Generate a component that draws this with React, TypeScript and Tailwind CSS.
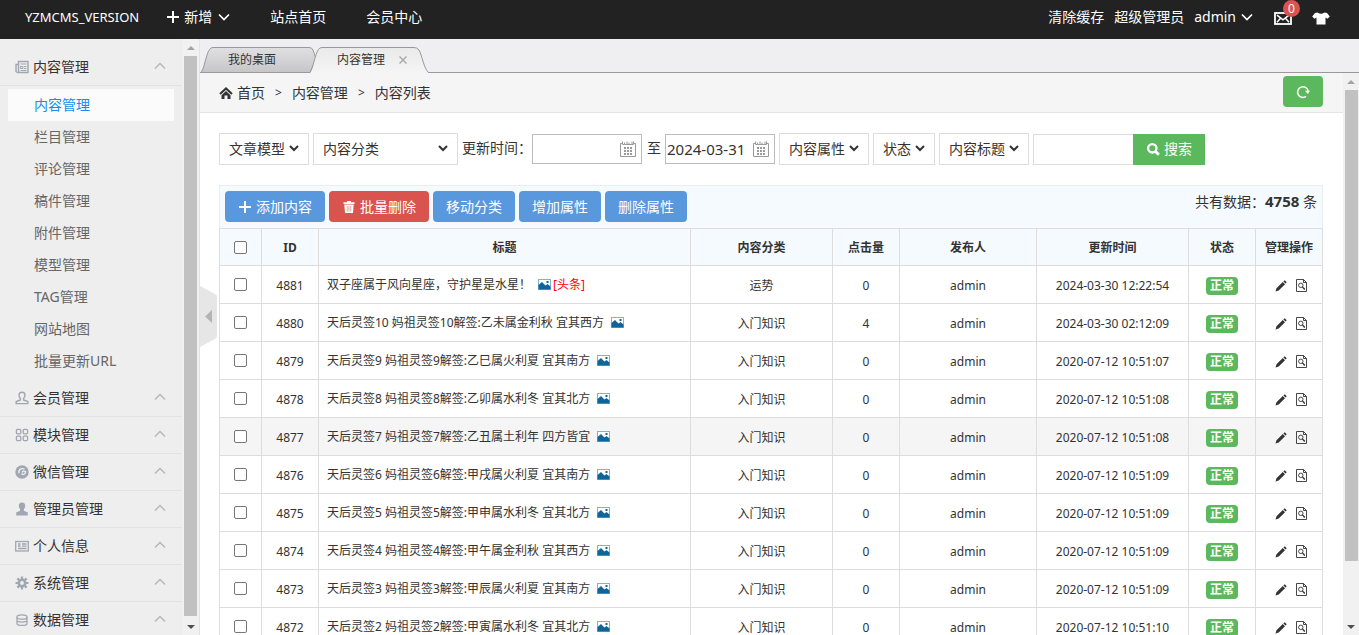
import React, { useState } from "react";

type IconProps = { className?: string };

const PlusIcon = ({ className }: IconProps) => (
  <svg viewBox="0 0 14 14" className={className} fill="currentColor" aria-hidden="true">
    <path d="M6 1h2v5h5v2H8v5H6V8H1V6h5z" />
  </svg>
);

const ChevronIcon = ({ className }: IconProps) => (
  <svg viewBox="0 0 12 12" className={className} fill="none" stroke="currentColor" strokeWidth="1.7" aria-hidden="true">
    <path d="M1 3.5l5 5 5-5" />
  </svg>
);

const CaretUpIcon = ({ className }: IconProps) => (
  <svg viewBox="0 0 12 12" className={className} fill="none" stroke="currentColor" strokeWidth="1.3" aria-hidden="true">
    <path d="M1 7.500l5-5 5 5" />
  </svg>
);

const MailIcon = ({ className }: IconProps) => (
  <svg viewBox="0 0 18 13" className={className} fill="none" stroke="currentColor" strokeWidth="1.8" aria-hidden="true">
    <rect x="1" y="1" width="16" height="11" />
    <path d="M3 3.200L9 7.800 15 3.200M3 10.300L6.500 6.300M15 10.300L11.500 6.300" strokeWidth="1.5" />
  </svg>
);

const ShirtIcon = ({ className }: IconProps) => (
  <svg viewBox="0 0 18 13" className={className} fill="currentColor" aria-hidden="true">
    <path d="M5.500 0.500Q9 3 12.500 0.500L15 1 17.800 4.500 15.500 6.800 13.500 5.500V12.500H4.500V5.500L2.500 6.800 0.200 4.500 3 1z" />
  </svg>
);

const HomeIcon = ({ className }: IconProps) => (
  <svg viewBox="0 0 14 12" className={className} aria-hidden="true">
    <path d="M1 7l6-5.600L13 7" fill="none" stroke="currentColor" strokeWidth="2" />
    <path d="M2.500 8.200L7 4.100 11.500 8.200v3.800H8.500V8.500h-3V12h-3z" fill="currentColor" />
  </svg>
);

const RefreshIcon = ({ className }: IconProps) => (
  <svg viewBox="0 0 14 14" className={className} aria-hidden="true">
    <path d="M10 11.400A5.300 5.300 0 1 1 12.100 6" fill="none" stroke="currentColor" strokeWidth="1.500" />
    <path d="M9 5.800h5l-2.200 3.200z" fill="currentColor" />
  </svg>
);

const SearchIcon = ({ className }: IconProps) => (
  <svg viewBox="0 0 14 14" className={className} fill="none" stroke="currentColor" aria-hidden="true">
    <circle cx="6.300" cy="6.300" r="4.200" strokeWidth="2.300" />
    <path d="M9.300 9.300l3.500 3.500" strokeWidth="2.800" />
  </svg>
);

const TrashIcon = ({ className }: IconProps) => (
  <svg viewBox="0 0 12 12" className={className} aria-hidden="true">
    <path d="M4 0h4v1.300h3.500V3H0.500V1.300H4zM1.300 3.600h9.400L10 12H2z" fill="currentColor" />
    <path d="M4.300 5v5.500M6 5v5.500M7.700 5v5.500" stroke="#d9534f" strokeWidth="0.500" />
  </svg>
);

const CalendarIcon = ({ className }: IconProps) => (
  <svg viewBox="0 0 17 17" className={className} fill="none" stroke="currentColor" aria-hidden="true">
    <path d="M2.500 2.500h-2v13h15v-13h-2M2.500 0.500v3h2v-2M4.500 3.500h2.500v-3M7 3.500h2v-2M9 3.500h3v-3M12 3.500h1.500v-3" />
    <path d="M4 7h8M4 10h8M4 13h8" strokeWidth="2" strokeDasharray="2 1" />
  </svg>
);

const PictureIcon = ({ className }: IconProps) => (
  <svg viewBox="0 0 13 11" className={className} aria-hidden="true">
    <rect x="0.500" y="0.500" width="12" height="10" fill="#fff" stroke="#7fb3d0" />
    <path d="M0.500 10.500V6L4 3l3.500 3.500L9.500 5l3 2.500v3z" fill="#0d659c" />
    <rect x="8.500" y="2" width="2" height="2" fill="#0d659c" />
  </svg>
);

const PencilIcon = ({ className }: IconProps) => (
  <svg viewBox="0 0 12 12" className={className} fill="currentColor" aria-hidden="true">
    <path d="M0.500 11.500l1-3.200L7.800 2l2.200 2.200-6.300 6.300zM8.400 1.400L9.800 0.300l1.900 1.900-1.100 1.400z" />
  </svg>
);

const PreviewIcon = ({ className }: IconProps) => (
  <svg viewBox="0 0 11 13" className={className} fill="none" stroke="currentColor" strokeWidth="0.900" aria-hidden="true">
    <path d="M0.500 0.500h7l3 3v9h-10zM7.500 0.500v3h3" />
    <circle cx="4.800" cy="6.300" r="2.200" />
    <path d="M6.400 7.900l2.400 2.600" strokeWidth="1.400" />
  </svg>
);

const NewsIcon = () => (
  <svg viewBox="0 0 14 14" className="size-[14px]" fill="none" stroke="currentColor" aria-hidden="true">
    <path d="M3.500 1.500h9.500v11H2.500l-1.500-1V4.500h2.500zM3.500 4v8" strokeWidth="1.400" />
    <path d="M5.500 4h6M5.500 6.500h2.500v2H5.500zM9 6.500h2.500M9 8.500h2.500M5.500 10.500h6" />
  </svg>
);

const UserLineIcon = () => (
  <svg viewBox="0 0 14 14" className="size-[14px]" fill="none" stroke="currentColor" strokeWidth="1.400" aria-hidden="true">
    <path d="M7 1.200c4 0 3.300 4.800 1.600 6.300v1.500l4.200 1.600v2H1.200v-2L5.400 9V7.500C3.700 6 3 1.200 7 1.200z" />
  </svg>
);

const GridIcon = () => (
  <svg viewBox="0 0 14 14" className="size-[14px]" fill="none" stroke="currentColor" strokeWidth="1.300" aria-hidden="true">
    <rect x="1.400" y="1.400" width="4.400" height="4.400" rx="1" />
    <rect x="8.200" y="1.400" width="4.400" height="4.400" rx="1" />
    <rect x="1.400" y="8.200" width="4.400" height="4.400" rx="1" />
    <rect x="8.200" y="8.200" width="4.400" height="4.400" rx="1" />
  </svg>
);

const WechatIcon = () => (
  <svg viewBox="0 0 14 14" className="size-[14px]" aria-hidden="true">
    <circle cx="7" cy="7" r="6.700" fill="currentColor" />
    <path d="M9.500 4.200C6 2.500 3 5 4 8.300M6.500 8.800c2 1.300 4.300 0 4-2.200-1.500-1-3-.4-3.400.9" fill="none" stroke="#eee" strokeWidth="1.400" />
  </svg>
);

const UserSolidIcon = () => (
  <svg viewBox="0 0 14 14" className="size-[14px]" fill="currentColor" aria-hidden="true">
    <path d="M7 0.500c4.200 0 3.600 4.800 1.900 6.700v1.600l3.900 1.700V13.500H1.200v-3L5.100 8.800V7.200C3.400 5.300 2.800.5 7 .5z" />
  </svg>
);

const CardIcon = () => (
  <svg viewBox="0 0 14 14" className="size-[14px]" fill="none" stroke="currentColor" aria-hidden="true">
    <rect x="0.700" y="2.500" width="12.600" height="9.500" strokeWidth="1.300" />
    <path d="M3 5h2.500M3 7h2.500M3 9.500h8.500M7 5h4.500M7 7.200h4.500" strokeWidth="1.300" />
  </svg>
);

const GearIcon = () => (
  <svg viewBox="0 0 14 14" className="size-[14px]" fill="none" stroke="currentColor" aria-hidden="true">
    <circle cx="7" cy="7" r="3.200" strokeWidth="2.600" />
    <path d="M7 0.500v3M7 10.500v3M.5 7h3M10.500 7h3M2.400 2.400l2 2M9.600 9.600l2 2M2.400 11.600l2-2M9.600 4.400l2-2" strokeWidth="2.200" />
  </svg>
);

const DatabaseIcon = () => (
  <svg viewBox="0 0 14 14" className="size-[14px]" fill="none" stroke="currentColor" strokeWidth="1.300" aria-hidden="true">
    <ellipse cx="7" cy="4" rx="5" ry="2.200" />
    <path d="M2 4v6.500c0 2.600 10 2.600 10 0V4M2 7.300c0 2.400 10 2.400 10 0" />
  </svg>
);

const contentLinks = ["内容管理", "栏目管理", "评论管理", "稿件管理", "附件管理", "模型管理", "TAG管理", "网站地图", "批量更新URL"];

const groups = [
  { name: "会员管理", icon: UserLineIcon },
  { name: "模块管理", icon: GridIcon },
  { name: "微信管理", icon: WechatIcon },
  { name: "管理员管理", icon: UserSolidIcon },
  { name: "个人信息", icon: CardIcon },
  { name: "系统管理", icon: GearIcon },
  { name: "数据管理", icon: DatabaseIcon },
];

const rows = [
  { id: 4881, title: "双子座属于风向星座，守护星是水星！", top: true, category: "运势", hits: 0, time: "2024-03-30 12:22:54" },
  { id: 4880, title: "天后灵签10 妈祖灵签10解签:乙未属金利秋 宜其西方", category: "入门知识", hits: 4, time: "2024-03-30 02:12:09" },
  { id: 4879, title: "天后灵签9 妈祖灵签9解签:乙巳属火利夏 宜其南方", category: "入门知识", hits: 0, time: "2020-07-12 10:51:07" },
  { id: 4878, title: "天后灵签8 妈祖灵签8解签:乙卯属水利冬 宜其北方", category: "入门知识", hits: 0, time: "2020-07-12 10:51:08" },
  { id: 4877, title: "天后灵签7 妈祖灵签7解签:乙丑属土利年 四方皆宜", category: "入门知识", hits: 0, time: "2020-07-12 10:51:08", hover: true },
  { id: 4876, title: "天后灵签6 妈祖灵签6解签:甲戌属火利夏 宜其南方", category: "入门知识", hits: 0, time: "2020-07-12 10:51:09" },
  { id: 4875, title: "天后灵签5 妈祖灵签5解签:甲申属水利冬 宜其北方", category: "入门知识", hits: 0, time: "2020-07-12 10:51:09" },
  { id: 4874, title: "天后灵签4 妈祖灵签4解签:甲午属金利秋 宜其西方", category: "入门知识", hits: 0, time: "2020-07-12 10:51:09" },
  { id: 4873, title: "天后灵签3 妈祖灵签3解签:甲辰属火利夏 宜其南方", category: "入门知识", hits: 0, time: "2020-07-12 10:51:09" },
  { id: 4872, title: "天后灵签2 妈祖灵签2解签:甲寅属水利冬 宜其北方", category: "入门知识", hits: 0, time: "2020-07-12 10:51:10" },
];

function GroupHeader({ name, Icon }: { name: string; Icon: React.ComponentType }) {
  return (
    <button type="button" className="flex h-[37px] w-full items-center border-b border-[#e2e2e2] pr-4 pl-[15px] text-sm text-[#333]">
      <span className="text-[#a0a7b1]"><Icon /></span>
      <span className="ml-1">{name}</span>
      <CaretUpIcon className="ml-auto size-3 text-[#b5b5b5]" />
    </button>
  );
}

function ScrollArrow({ up, dark }: { up?: boolean; dark?: boolean }) {
  return (
    <svg viewBox="0 0 8 4" className={`h-1 w-2 ${dark ? "text-[#505050]" : "text-[#a3a3a3]"}`} fill="currentColor" aria-hidden="true">
      <path d={up ? "M0 4l4-4 4 4z" : "M0 0l4 4 4-4z"} />
    </svg>
  );
}

function Select({ label, value, className }: { label: string; value: string; className: string }) {
  return (
    <div className={`relative ${className}`}>
      <select aria-label={label} className="h-8 w-full appearance-none border border-[#ddd] bg-white px-[9px] text-sm text-[#333] outline-none">
        <option>{value}</option>
      </select>
      <svg viewBox="0 0 10 7" className="pointer-events-none absolute top-[12px] right-[10px] h-[7px] w-[10px]" fill="none" stroke="#333" strokeWidth="2" aria-hidden="true">
        <path d="M1 1l4 4 4-4" />
      </svg>
    </div>
  );
}

function DateInput({ label, initial }: { label: string; initial: string }) {
  const [value, setValue] = useState(initial);
  return (
    <div className="relative w-[110px]">
      <input aria-label={label} value={value} onChange={(e) => setValue(e.target.value)} className="block h-[30px] w-full border border-[#bbb] bg-white pr-6 pl-px text-[15px] text-[#333] outline-none" />
      <CalendarIcon className="pointer-events-none absolute top-[7px] right-[5px] size-[17px] text-[#999]" />
    </div>
  );
}

const toolbarButton = "flex h-[31px] items-center gap-1 rounded px-[13px] text-sm text-white";
const boxCell = "border border-[#ddd]";
const cell = "border border-[#ddd] pt-[2px] text-center";
const checkbox = "block mx-auto size-[13px] appearance-none rounded-[2px] border border-[#767676] bg-white checked:bg-[#5a98de]";

export default function App() {
  return (
    <div className="flex h-screen flex-col overflow-hidden bg-white font-['Noto_Sans','Noto_Sans_CJK_SC',sans-serif] text-sm text-[#333]">
      <header className="flex h-[39px] shrink-0 items-center bg-[#222] pb-[5px] text-sm text-white">
        <a href="#" className="ml-[25px] text-[13px]">YZMCMS_VERSION</a>
        <button type="button" className="ml-[27px] flex items-center gap-1">
          <PlusIcon className="size-[14px]" />
          新增
          <ChevronIcon className="ml-[2px] size-3" />
        </button>
        <a href="#" className="ml-10">站点首页</a>
        <a href="#" className="ml-10">会员中心</a>
        <a href="#" className="ml-auto">清除缓存</a>
        <span className="ml-[10px]">超级管理员</span>
        <button type="button" className="ml-[10px] flex items-center gap-1">
          admin
          <ChevronIcon className="ml-px size-3" />
        </button>
        <a href="#" aria-label="消息" className="relative ml-[21px]">
          <MailIcon className="mt-[3px] h-[13px] w-[18px]" />
          <span className="absolute -top-[9px] left-[9px] flex size-[17px] items-center justify-center rounded-full bg-[#d9534f] text-xs leading-none">0</span>
        </a>
        <button type="button" aria-label="换肤" className="mr-[29px] ml-5">
          <ShirtIcon className="mt-[3px] h-[13px] w-[18px]" />
        </button>
      </header>

      <div className="flex min-h-0 flex-1">
        <aside className="flex w-[200px] shrink-0 border-r border-[#e3e3e3] bg-[#eee]">
          <nav className="min-w-0 flex-1 overflow-hidden pt-[10px]">
            <GroupHeader name="内容管理" Icon={NewsIcon} />
            <ul className="py-[3px]">
              {contentLinks.map((name, i) => (
                <li key={name} className="px-2">
                  <a href="#" className={`flex h-8 items-center pl-[26px] ${i === 0 ? "bg-[#fbfbfb] text-[#148cf1]" : "text-[#666]"}`}>{name}</a>
                </li>
              ))}
            </ul>
            {groups.map((g) => (
              <GroupHeader key={g.name} name={g.name} Icon={g.icon} />
            ))}
          </nav>
          <div className="flex w-[17px] flex-col items-center bg-[#f1f1f1] pt-[7px] pb-[6px]">
            <ScrollArrow up />
            <div className="mt-[6px] mb-[9px] w-[13px] flex-1 bg-[#c1c1c1]" />
            <ScrollArrow dark />
          </div>
        </aside>

        <main className="relative flex min-w-0 flex-1 flex-col">
          <div className="relative flex h-[34px] shrink-0 items-end border-b border-[#999] bg-[#efeef0]">
            <svg className="absolute bottom-[-1px] left-0 h-[26px] w-[230px]" viewBox="0 0 230 26" aria-hidden="true">
              <defs>
                <linearGradient id="tab" x1="0" y1="0" x2="0" y2="1">
                  <stop offset="0" stopColor="#e0e0e2" />
                  <stop offset="1" stopColor="#c6c6c8" />
                </linearGradient>
                <linearGradient id="tabActive" x1="0" y1="0" x2="0" y2="1">
                  <stop offset="0" stopColor="#e9e9e9" />
                  <stop offset="1" stopColor="#f5f5f5" />
                </linearGradient>
              </defs>
              <path d="M0.500 25.500C4 24 6 7 9.500 2.500Q10.500.5 13 .5H109Q112 .5 113 3L116 12 110 25.500z" fill="url(#tab)" stroke="#999" />
              <path d="M110 26C113 22 115 7 118.500 2.500Q119.500.5 122 .5H214Q217 .5 219 3C222 8 224 22 228.500 26z" fill="url(#tabActive)" />
              <path d="M110 25.500C113 22 115 7 118.500 2.500Q119.500.5 122 .5H214Q217 .5 219 3C222 8 224 22 228.500 25.500" fill="none" stroke="#999" />
            </svg>
            <button type="button" className="relative h-6 w-[109px] pl-7 text-left text-xs">我的桌面</button>
            <button type="button" className="relative flex h-6 items-center pl-7 text-xs">
              内容管理
              <svg viewBox="0 0 8 8" className="ml-[14px] size-2" stroke="#aaa" strokeWidth="1.500" aria-hidden="true">
                <path d="M.5.5l7 7M7.500.5l-7 7" />
              </svg>
            </button>
          </div>

          <div className="flex min-h-0 flex-1">
            <div className="min-w-0 flex-1 overflow-hidden">
              <div className="flex h-10 items-center border-b border-[#e5e5e5] bg-[#f5f5f5] pr-5 pl-[19px]">
                <HomeIcon className="h-3 w-[14px]" />
                <a href="#" className="ml-1">首页</a>
                <span className="mx-[10px] text-xs">&gt;</span>
                <a href="#">内容管理</a>
                <span className="mx-[10px] text-xs">&gt;</span>
                <span>内容列表</span>
                <button type="button" aria-label="刷新" className="mt-[3px] ml-auto flex h-[31px] w-10 items-center justify-center self-start rounded bg-[#5cb85c] text-white">
                  <RefreshIcon className="size-[14px]" />
                </button>
              </div>

              <div className="pt-5 pr-5 pl-[19px]">
                <form className="flex items-center gap-1" onSubmit={(e) => e.preventDefault()}>
                  <Select label="模型" value="文章模型" className="w-[90px]" />
                  <Select label="分类" value="内容分类" className="w-[145px]" />
                  <span className="w-[66px] pb-[2px] whitespace-nowrap">更新时间：</span>
                  <DateInput label="开始日期" initial="" />
                  <span className="w-[15px] pb-[2px] text-right">至</span>
                  <DateInput label="结束日期" initial="2024-03-31" />
                  <Select label="属性" value="内容属性" className="w-[90px]" />
                  <Select label="状态" value="状态" className="w-[62px]" />
                  <Select label="搜索范围" value="内容标题" className="w-[90px]" />
                  <div className="flex">
                    <input aria-label="关键词" className="h-[31px] w-[100px] border border-r-0 border-[#ddd] bg-white px-2 outline-none" />
                    <button type="submit" className="flex h-[31px] w-[72px] items-center justify-center gap-1 bg-[#5cb85c] text-white">
                      <SearchIcon className="size-[14px]" />
                      搜索
                    </button>
                  </div>
                </form>

                <div className="mt-5 flex h-[43px] items-start gap-1 border border-b-0 border-[#e8eef2] bg-[#f5fafe] px-[5px] pt-[5px]">
                  <button type="button" className={`${toolbarButton} bg-[#5a98de]`}><PlusIcon className="size-[14px]" />添加内容</button>
                  <button type="button" className={`${toolbarButton} bg-[#d9534f]`}><TrashIcon className="mx-px size-3" />批量删除</button>
                  <button type="button" className={`${toolbarButton} bg-[#5a98de]`}>移动分类</button>
                  <button type="button" className={`${toolbarButton} bg-[#5a98de]`}>增加属性</button>
                  <button type="button" className={`${toolbarButton} bg-[#5a98de]`}>删除属性</button>
                  <span className="ml-auto">共有数据：<strong className="text-[15px]">4758</strong> 条</span>
                </div>

                <table className="w-full table-fixed border-collapse text-xs">
                  <colgroup>
                    <col className="w-[42px]" />
                    <col className="w-[57px]" />
                    <col />
                    <col className="w-[142px]" />
                    <col className="w-[67px]" />
                    <col className="w-[137px]" />
                    <col className="w-[152px]" />
                    <col className="w-[67px]" />
                    <col className="w-[67px]" />
                  </colgroup>
                  <thead>
                    <tr className="h-[37px] bg-[#f5fafe]">
                      <th className={boxCell}><input type="checkbox" aria-label="全选" className={checkbox} /></th>
                      {["ID", "标题", "内容分类", "点击量", "发布人", "更新时间", "状态", "管理操作"].map((h) => (
                        <th key={h} className={`${cell} font-bold whitespace-nowrap`}>{h}</th>
                      ))}
                    </tr>
                  </thead>
                  <tbody>
                    {rows.map((r) => (
                      <tr key={r.id} className={`h-[38px] ${r.hover ? "bg-[#f5f5f5]" : ""}`}>
                        <td className={boxCell}><input type="checkbox" aria-label={`选择 ${r.id}`} className={checkbox} /></td>
                        <td className={cell}>{r.id}</td>
                        <td className="border border-[#ddd] px-2">
                          <div className="flex items-center whitespace-nowrap">
                            <a href="#">{r.title}</a>
                            <PictureIcon className="ml-[7px] h-[11px] w-[13px] shrink-0" />
                            {r.top && <span className="ml-[2px] text-[#f00]">[头条]</span>}
                          </div>
                        </td>
                        <td className={cell}>{r.category}</td>
                        <td className={cell}>{r.hits}</td>
                        <td className={cell}>admin</td>
                        <td className={`${cell} whitespace-nowrap`}>{r.time}</td>
                        <td className={cell}>
                          <span className="mx-auto flex h-[18px] w-8 items-center justify-center rounded bg-[#5cb85c] font-bold text-white">正常</span>
                        </td>
                        <td className={cell}>
                          <span className="flex items-center justify-center gap-[9px] pl-[3px]">
                            <a href="#" aria-label="编辑"><PencilIcon className="size-3" /></a>
                            <a href="#" aria-label="预览"><PreviewIcon className="h-[13px] w-[11px]" /></a>
                          </span>
                        </td>
                      </tr>
                    ))}
                  </tbody>
                </table>
              </div>
            </div>
            <div className="flex w-4 shrink-0 flex-col items-center bg-[#f1f1f1] pt-[7px] pb-[6px]">
              <ScrollArrow up />
              <div className="mt-[6px] h-[471px] w-[13px] bg-[#c1c1c1]" />
              <div className="mt-auto"><ScrollArrow dark /></div>
            </div>
          </div>

          <button type="button" aria-label="收起侧栏" className="absolute top-[247px] left-0 h-[61px] w-[17px]">
            <svg viewBox="0 0 17 61" className="h-full w-full" aria-hidden="true">
              <path d="M0 0l15 8q2 1 2 3v39q0 2-2 3l-15 8z" fill="#e6e6e6" />
              <path d="M12 24v13l-7-6.500z" fill="#b4b4b4" />
            </svg>
          </button>
        </main>
      </div>
    </div>
  );
}
